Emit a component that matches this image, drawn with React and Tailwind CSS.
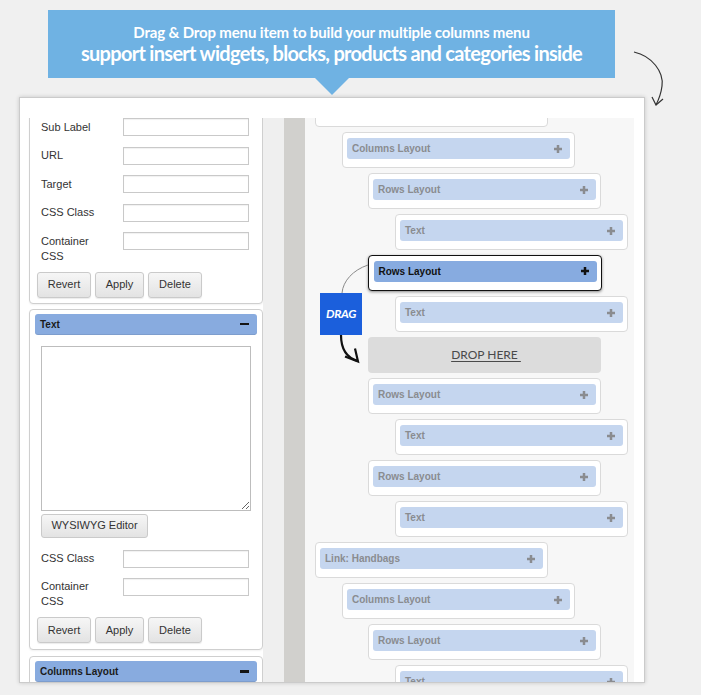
import React from "react";

const UI = { fontFamily: '"Liberation Sans", Arial, sans-serif' };
const BANNER = { fontFamily: 'Lato, "Open Sans", sans-serif' };

function Plus({ color }) {
  return (
    <svg width="8" height="8" viewBox="0 0 8 8" className="block">
      <rect x="2.75" y="0" width="2.5" height="8" fill={color} />
      <rect x="0" y="2.75" width="8" height="2.5" fill={color} />
    </svg>
  );
}

function Minus() {
  return <div className="w-[9px] h-[2.5px] bg-[#151515]" />;
}

function Field({ label }) {
  return (
    <div className="flex items-start pl-[6px]">
      <div className="w-[82px] pt-[1.5px] text-[11px] leading-[15px] text-[#333]">{label}</div>
      <div className="w-[126px] h-[18px] border border-[#c9c9c9] bg-white shadow-[inset_0_1px_1px_rgba(0,0,0,0.06)]" />
    </div>
  );
}

function Btn({ children, w }) {
  return (
    <div
      className={`${w} h-[26px] flex items-center justify-center border border-[#cacaca] rounded-[3px] bg-gradient-to-b from-[#f6f6f6] to-[#e3e3e3] text-[11px] text-[#333] shadow-[0_1px_1px_rgba(0,0,0,0.08)]`}
    >
      {children}
    </div>
  );
}

function Buttons({ mt }) {
  return (
    <div className={`flex gap-[4px] ml-[2px] ${mt}`}>
      <Btn w="w-[54px]">Revert</Btn>
      <Btn w="w-[49px]">Apply</Btn>
      <Btn w="w-[54px]">Delete</Btn>
    </div>
  );
}

function CardHeader({ title }) {
  return (
    <div className="h-[21px] bg-[#88abdf] rounded-[3px] flex items-center justify-between pl-[5px] pr-[8px] shadow-[inset_0_-1px_0_rgba(0,0,0,0.08)]">
      <span className="text-[10px] font-bold text-[#1b1b1b]">{title}</span>
      <Minus />
    </div>
  );
}

const LEVEL_ML = ["ml-[10px]", "ml-[37px]", "ml-[63px]", "ml-[90px]"];

const tree = [
  { lv: 0, label: "Link: Bags" },
  { lv: 1, label: "Columns Layout" },
  { lv: 2, label: "Rows Layout" },
  { lv: 3, label: "Text" },
  { lv: 2, label: "Rows Layout", active: true },
  { lv: 3, label: "Text" },
  { lv: 2, drop: true },
  { lv: 2, label: "Rows Layout" },
  { lv: 3, label: "Text" },
  { lv: 2, label: "Rows Layout" },
  { lv: 3, label: "Text" },
  { lv: 0, label: "Link: Handbags" },
  { lv: 1, label: "Columns Layout" },
  { lv: 2, label: "Rows Layout" },
  { lv: 3, label: "Text" },
];

function TreeItem({ item }) {
  const ml = LEVEL_ML[item.lv];
  if (item.drop) {
    return (
      <div className={`${ml} w-[233px] h-[36px] shrink-0 rounded-[4px] bg-[#dcdcdc] flex items-center justify-center`}>
        <span style={BANNER} className="text-[12px] text-[#4a4a4a] underline underline-offset-2 pl-[3px]">
          DROP HERE&nbsp;
        </span>
      </div>
    );
  }
  if (item.active) {
    return (
      <div className={`${ml} w-[234px] h-[36px] shrink-0 rounded-[4px] bg-white border-[1.5px] border-[#111] shadow-[0_1px_3px_rgba(0,0,0,0.45)] pt-[4.5px] px-[4.5px]`}>
        <div className="h-[21px] rounded-[3px] bg-[#87abe0] flex items-center justify-between pl-[5px] pr-[8px]">
          <span className="text-[10px] font-bold text-[#111]">{item.label}</span>
          <Plus color="#111" />
        </div>
      </div>
    );
  }
  return (
    <div className={`${ml} w-[233px] h-[36px] shrink-0 rounded-[4px] bg-white border border-[#dadada] pt-[5px] px-[4px]`}>
      <div className="h-[21px] rounded-[3px] bg-[#c5d6ef] flex items-center justify-between pl-[5px] pr-[8px]">
        <span className="text-[10px] font-bold text-[#8a8c90]">{item.label}</span>
        <Plus color="#8a8c90" />
      </div>
    </div>
  );
}

export default function App() {
  return (
    <div style={UI} className="relative w-[701px] h-[695px] bg-[#f0f0f0] overflow-hidden pt-[10px]">
      {/* Banner */}
      <div className="relative ml-[48px] w-[567px] h-[68px] bg-[#6fb2e3] flex flex-col items-center justify-center text-white" style={BANNER}>
        <div className="text-[15px] leading-[18px] font-bold tracking-[-0.15px]">
          Drag &amp; Drop menu item to build your multiple columns menu
        </div>
        <div className="text-[20px] leading-[24px] font-bold tracking-[-0.7px]">
          support insert widgets, blocks, products and categories inside
        </div>
        <div className="absolute left-[267px] top-[68px] w-0 h-0 border-l-[17px] border-r-[17px] border-t-[17px] border-l-transparent border-r-transparent border-t-[#6fb2e3]" />
      </div>

      {/* Panel */}
      <div className="ml-[19px] mt-[19px] w-[626px] h-[586px] bg-white border border-[#cbcbcb] shadow-[0_0_4px_rgba(0,0,0,0.18)] pt-[20px]">
        <div className="flex h-full">
          {/* Left column */}
          <div className="w-[243px] h-full overflow-hidden pl-[9px] bg-white">
            {/* top card (scrolled) */}
            <div className="-mt-[30px] w-[234px] border border-[#cfcfcf] rounded-[4px] bg-white pt-[29px] px-[5px] pb-[5px] shadow-[0_1px_2px_rgba(0,0,0,0.06)]">
              <div className="flex flex-col gap-[10.5px]">
                <Field label="Sub Label" />
                <Field label="URL" />
                <Field label="Target" />
                <Field label="CSS Class" />
                <Field label={<>Container<br />CSS</>} />
              </div>
              <Buttons mt="mt-[8px]" />
            </div>

            {/* Text card */}
            <div className="mt-[5px] w-[234px] border border-[#cfcfcf] rounded-[4px] bg-white pt-[4px] px-[5px] pb-[6px] shadow-[0_1px_2px_rgba(0,0,0,0.06)]">
              <CardHeader title="Text" />
              <textarea
                readOnly
                className="block mt-[11px] ml-[6px] w-[210px] h-[165px] border border-[#bdbdbd] bg-white outline-none"
              />
              <div className="mt-[3px] ml-[6px] w-[107px] h-[24px] flex items-center justify-center border border-[#cacaca] rounded-[3px] bg-gradient-to-b from-[#f6f6f6] to-[#e3e3e3] text-[11px] text-[#333]">
                WYSIWYG Editor
              </div>
              <div className="mt-[12px] flex flex-col gap-[10px]">
                <Field label="CSS Class" />
                <Field label={<>Container<br />CSS</>} />
              </div>
              <Buttons mt="mt-[8px]" />
            </div>

            {/* Columns Layout card */}
            <div className="mt-[6px] w-[234px] border border-[#cfcfcf] rounded-[4px] bg-white pt-[4px] px-[5px] pb-[6px] h-[80px]">
              <CardHeader title="Columns Layout" />
            </div>
          </div>

          {/* strips */}
          <div className="w-[21px] h-full bg-[#efefef]" />
          <div className="w-[21px] h-full bg-[#d1d0cd]" />

          {/* Tree area */}
          <div className="w-[329px] h-full bg-[#f7f7f7] overflow-hidden">
            <div className="-mt-[27px] flex flex-col gap-[5px]">
              {tree.map((it, i) => (
                <TreeItem key={i} item={it} />
              ))}
            </div>
          </div>
        </div>
      </div>

      {/* DRAG badge */}
      <div className="absolute left-[320px] top-[293px] w-[42px] h-[42px] bg-[#1b5fdc] flex items-center justify-center">
        <span style={BANNER} className="text-white text-[12px] font-bold italic tracking-[-0.3px]">DRAG</span>
      </div>

      {/* arrows */}
      <svg className="absolute left-0 top-0 pointer-events-none" width="701" height="695" viewBox="0 0 701 695">
        <path d="M634,52 C652,56 664,72 662,86 C661,94 659,99 656,105" fill="none" stroke="#333" strokeWidth="1.2" />
        <path d="M652,97 L656,105 L663,99" fill="none" stroke="#333" strokeWidth="1.2" />
        <path d="M368,265 C353,270 343,281 342,293" fill="none" stroke="#8a8a8a" strokeWidth="1" />
        <path d="M341,335 C341,349 347,358 358,361" fill="none" stroke="#111" strokeWidth="2.2" />
        <path d="M345,356.5 L358,361.5 L355,348.5" fill="none" stroke="#111" strokeWidth="2.2" strokeLinejoin="miter" />
      </svg>
    </div>
  );
}
